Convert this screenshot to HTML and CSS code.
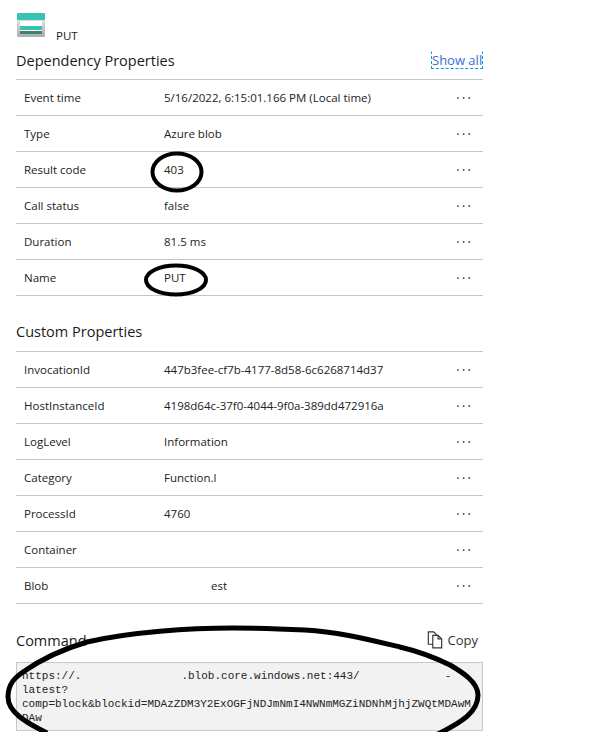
FILE: index.html
```html
<!DOCTYPE html>
<html lang="en">
<head>
    <meta charset="UTF-8">
    <title>Dependency Properties</title>
    <link rel="stylesheet" href="styles.css">
</head>
<body>
    <div class="page">
        <div class="item-head">
            <svg class="blob-icon" width="30" height="24" viewBox="0 0 30 24">
                <defs>
                    <linearGradient id="body" x1="0" y1="0" x2="0" y2="1">
                        <stop offset="0" stop-color="#e4e6e6"/>
                        <stop offset="1" stop-color="#a9adad"/>
                    </linearGradient>
                </defs>
                <rect x="1" y="5" width="28" height="19" rx="1" fill="url(#body)"/>
                <rect x="1" y="0" width="28" height="7" rx="1" fill="#37c2b1"/>
                <rect x="4" y="8" width="22" height="5" fill="#ffffff"/>
                <rect x="4" y="13" width="22" height="4" fill="#37c2b1"/>
                <rect x="4" y="17" width="22" height="1" fill="#ffffff"/>
                <rect x="4" y="18" width="22" height="3" fill="#3f7f78"/>
            </svg>
            <span class="item-name">PUT</span>
        </div>

        <div class="section-head">
            <h2>Dependency Properties</h2>
            <a class="show-all">Show all</a>
        </div>
        <div class="rows">
            <div class="row"><span class="key">Event time</span><span class="val">5/16/2022, 6:15:01.166 PM (Local time)</span><span class="more">···</span></div>
            <div class="row"><span class="key">Type</span><span class="val">Azure blob</span><span class="more">···</span></div>
            <div class="row"><span class="key">Result code</span><span class="val">403</span><span class="more">···</span></div>
            <div class="row"><span class="key">Call status</span><span class="val">false</span><span class="more">···</span></div>
            <div class="row"><span class="key">Duration</span><span class="val">81.5 ms</span><span class="more">···</span></div>
            <div class="row"><span class="key">Name</span><span class="val">PUT</span><span class="more">···</span></div>
        </div>

        <div class="section-head custom">
            <h2>Custom Properties</h2>
        </div>
        <div class="rows">
            <div class="row"><span class="key">InvocationId</span><span class="val">447b3fee-cf7b-4177-8d58-6c6268714d37</span><span class="more">···</span></div>
            <div class="row"><span class="key">HostInstanceId</span><span class="val">4198d64c-37f0-4044-9f0a-389dd472916a</span><span class="more">···</span></div>
            <div class="row"><span class="key">LogLevel</span><span class="val">Information</span><span class="more">···</span></div>
            <div class="row"><span class="key">Category</span><span class="val">Function.l</span><span class="more">···</span></div>
            <div class="row"><span class="key">ProcessId</span><span class="val">4760</span><span class="more">···</span></div>
            <div class="row"><span class="key">Container</span><span class="val"></span><span class="more">···</span></div>
            <div class="row"><span class="key">Blob</span><span class="val"><span class="hidden-part"></span>est</span><span class="more">···</span></div>
        </div>

        <div class="section-head command">
            <h2>Command</h2>
            <a class="copy">
                <svg width="16" height="18" viewBox="0 0 18 20" fill="#fff" stroke="#333" stroke-width="1.3">
                    <path d="M1.5 .8h6l3 3v11h-9z"/>
                    <path d="M6.5 4.8h6l4 4v10h-10z"/>
                    <path d="M12.5 4.8v4h4" fill="none"/>
                </svg>
                Copy
            </a>
        </div>
        <div class="code">
            <div>https://.<span class="gap-a"></span>.blob.core.windows.net:443/<span class="gap-b"></span>-</div>
            <div>latest?</div>
            <div>comp=block&amp;blockid=MDAzZDM3Y2ExOGFjNDJmNmI4NWNmMGZiNDNhMjhjZWQtMDAwM</div>
            <div>DAw</div>
        </div>

        <svg class="marks" width="611" height="732" viewBox="0 0 611 732" fill="none" stroke="#000">
            <ellipse cx="177" cy="172" rx="24.5" ry="18.5" stroke-width="4"/>
            <ellipse cx="176" cy="280" rx="30" ry="14.5" stroke-width="4"/>
            <path d="M47 733C25 722 8 712 8 697C8 683 16 677 23 672C40 660 60 650 87 642C130 632 190 628 233 628C260 628 285 629 305 630C340 632 370 640 400 647C425 653 440 660 450 665C462 672 478 682 478 695C478 712 462 722 438 734" stroke-width="5"/>
        </svg>
    </div>
</body>
</html>
```

FILE: styles.css
```css
html, body {
    margin: 0;
    height: 732px;
    overflow: hidden;
    background-color: #fff;
}

body {
    font-family: "Open Sans", "Noto Sans", sans-serif;
    font-size: 11.5px;
    color: #222;
}

.page {
    position: relative;
    width: 467px;
    height: 719px;
    padding: 13px 0 0 16px;
}

.item-head {
    display: flex;
    align-items: flex-end;
    height: 31px;
}

.blob-icon {
    display: block;
    margin-bottom: 7px;
}

.item-name {
    margin-left: 10px;
    line-height: 16px;
}

.section-head {
    display: flex;
    align-items: center;
    justify-content: space-between;
    height: 30px;
    margin-top: 1px;
    border-bottom: 1px solid #c4c4c4;
    padding-bottom: 4px;
}

.section-head h2 {
    margin: 0;
    font-size: 14.5px;
    font-weight: 400;
    color: #1a1a1a;
}

.section-head.custom {
    margin-top: 20px;
    padding-bottom: 5px;
}

.section-head.command {
    margin-top: 21px;
    padding-bottom: 7px;
    border-bottom: none;
}

.show-all {
    width: 50px;
    border: 1px dashed #0a9bd0;
    border-top-color: transparent;
    font-size: 13px;
    line-height: 16px;
    color: #3a6fd8;
    white-space: nowrap;
    overflow: hidden;
}

.copy {
    display: flex;
    align-items: center;
    gap: 5px;
    margin-right: 5px;
    font-size: 13px;
    color: #333;
}

.row {
    display: flex;
    align-items: center;
    height: 35px;
    border-bottom: 1px solid #c4c4c4;
}

.key {
    width: 140px;
    margin-left: 8px;
}

.val {
    flex: 1;
}

.more {
    width: 15px;
    margin-right: 12px;
    font-size: 14px;
    letter-spacing: 2px;
    color: #444;
    white-space: nowrap;
}

.hidden-part {
    display: inline-block;
    width: 47px;
}

.code {
    height: 60px;
    padding: 6px 0 1px 5px;
    background-color: #f2f2f2;
    border: 1px solid #c8c8c8;
    font-family: "Liberation Mono", monospace;
    font-size: 11px;
    line-height: 14px;
    color: #222;
    white-space: nowrap;
    overflow: hidden;
}

.gap-a {
    display: inline-block;
    width: 100px;
}

.gap-b {
    display: inline-block;
    width: 85px;
}

.marks {
    position: absolute;
    top: 0;
    left: 0;
}
```
